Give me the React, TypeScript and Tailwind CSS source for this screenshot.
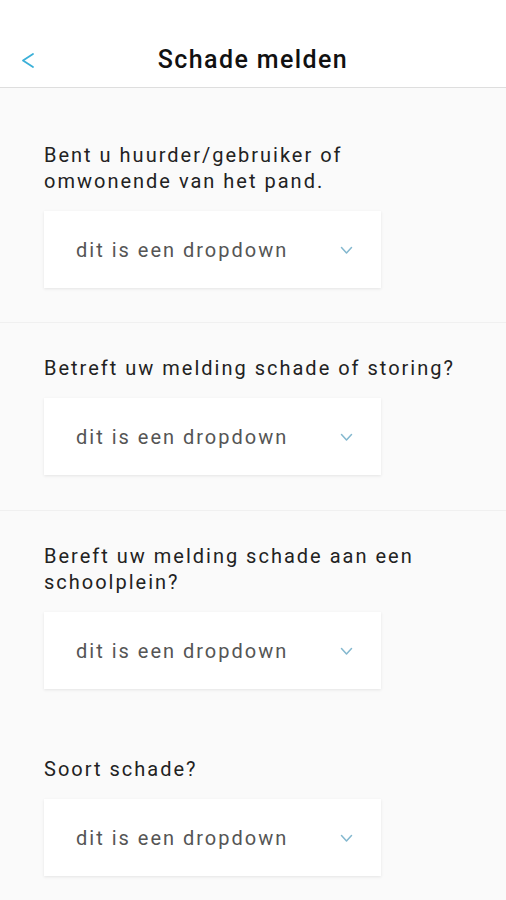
import React from 'react';

const questions = [
  { label: 'Bent u huurder/gebruiker of omwonende van het pand.', first: true, border: true },
  { label: 'Betreft uw melding schade of storing?', border: true },
  { label: 'Bereft uw melding schade aan een schoolplein?' },
  { label: 'Soort schade?' },
];

function Dropdown() {
  return (
    <div className="w-[337px] h-[77px] bg-white flex items-center justify-between pl-[32px] pr-[28px] shadow-[0_1px_3px_rgba(0,0,0,0.09)]">
      <span className="text-[20px] text-[#555] tracking-[2px]">dit is een dropdown</span>
      <svg width="13" height="10" viewBox="0 0 13 10" fill="none">
        <path d="M1.5 2.5l5 5.5 5-5.5" stroke="#84b8cf" strokeWidth="1.5" strokeLinecap="round" strokeLinejoin="round" />
      </svg>
    </div>
  );
}

export default function App() {
  return (
    <div className="w-[506px] h-[900px] overflow-hidden bg-[#fafafa] font-['Roboto',sans-serif]">
      <header className="h-[88px] bg-white border-b border-[#dedede] pt-[43px]">
        <div className="relative h-[34px] flex items-center justify-center">
          <svg className="absolute left-[20px] top-[9px]" width="16" height="17" viewBox="0 0 16 17" fill="none">
            <path d="M13 2L3 8.5l10 6.5" stroke="#3bb0d8" strokeWidth="1.8" strokeLinecap="round" strokeLinejoin="round" />
          </svg>
          <h1 className="text-[25px] font-medium text-[#111] tracking-[1.4px]">Schade melden</h1>
        </div>
      </header>

      {questions.map((q) => (
        <section
          key={q.label}
          className={`pl-[44px] pr-[40px] ${q.first ? 'pt-[54px] pb-[34px]' : 'pt-[32px] pb-[35px]'} ${q.border ? 'border-b border-[#f0f0f0]' : ''}`}
        >
          <p className="text-[20px] leading-[26px] text-[#222] tracking-[2px]">{q.label}</p>
          <div className="mt-[17px]">
            <Dropdown />
          </div>
        </section>
      ))}
    </div>
  );
}
